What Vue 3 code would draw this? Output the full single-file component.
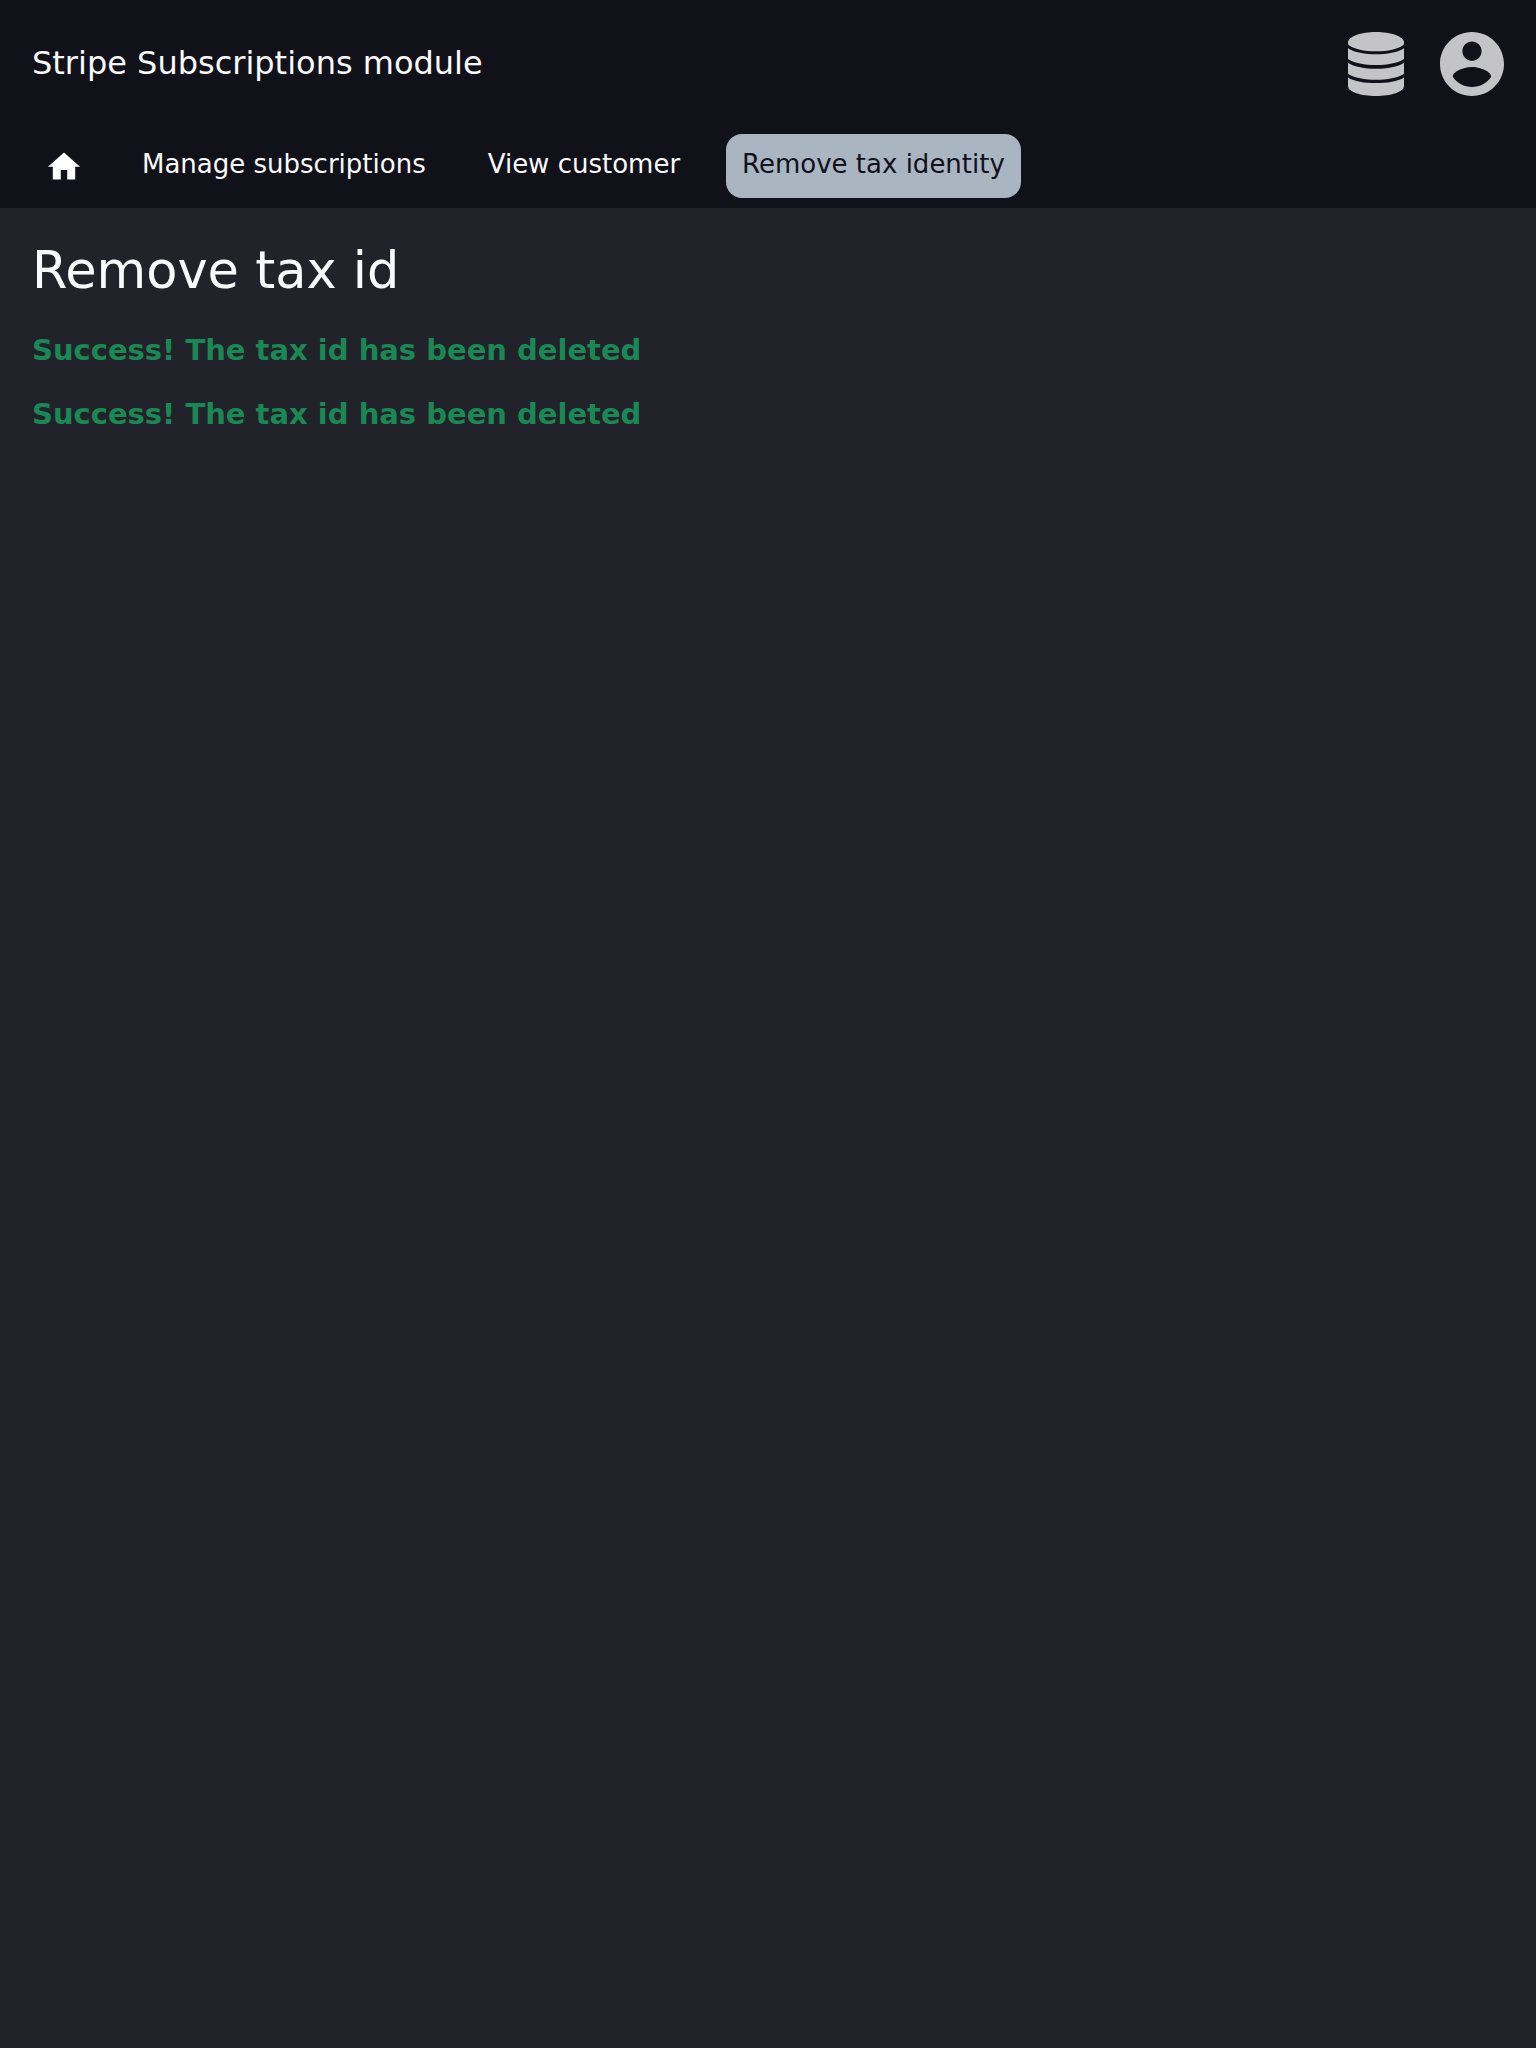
<script setup>
const links = [
  { label: 'Manage subscriptions', current: false },
  { label: 'View customer', current: false },
  { label: 'Remove tax identity', current: true }
]

const messages = [
  { id: 1, text: 'Success! The tax id has been deleted' },
  { id: 2, text: 'Success! The tax id has been deleted' }
]
</script>

<template>
  <div class="page">
    <header class="header">
      <div class="title-bar">
        <a class="title" href="#">Stripe Subscriptions module</a>
        <div class="menus">
          <button class="menu" type="button" aria-label="Administration">
            <svg width="56" height="64" viewBox="0 0 56 64" fill="currentColor" aria-hidden="true">
              <path d="M28 0C43 0 56 4.500 56 10.500c0 1 0 1.800-.6 2.400C50 17 40 19.300 28 19.300S6 17 .6 12.900C0 12.300 0 11.500 0 10.500 0 4.500 13 0 28 0z" />
              <path d="M0 16.300c6 4 17 6 28 6s22-2 28-6v10.700c-6 4-17 6-28 6s-22-2-28-6z" />
              <path d="M0 30.800c6 4 17 6 28 6s22-2 28-6v10.900c-6 4-17 6-28 6s-22-2-28-6z" />
              <path d="M0 45.400c6 4 17 5.700 28 5.700s22-1.700 28-5.700V54c0 6-13 10-28 10S0 60 0 54z" />
            </svg>
          </button>
          <button class="menu" type="button" aria-label="Account">
            <svg width="64" height="64" viewBox="2 2 20 20" fill="currentColor" aria-hidden="true">
              <path d="M12 2C6.480 2 2 6.480 2 12s4.480 10 10 10 10-4.480 10-10S17.520 2 12 2zm0 3c1.660 0 3 1.340 3 3s-1.340 3-3 3-3-1.340-3-3 1.340-3 3-3zm0 14.200c-2.500 0-4.710-1.280-6-3.220.030-1.990 4-3.080 6-3.080 1.990 0 5.970 1.090 6 3.080-1.290 1.940-3.500 3.220-6 3.220z" />
            </svg>
          </button>
        </div>
      </div>
      <nav class="nav" aria-label="Main">
        <a class="link home" href="#" aria-label="Home">
          <svg width="32" height="28" viewBox="2 3 20 17" fill="currentColor" aria-hidden="true">
            <path d="M10 20v-6h4v6h5v-8h3L12 3 2 12h3v8z" />
          </svg>
        </a>
        <a
          v-for="link in links"
          :key="link.label"
          class="link"
          :class="{ current: link.current }"
          :aria-current="link.current ? 'page' : null"
          href="#"
        >{{ link.label }}</a>
      </nav>
    </header>
    <main class="content">
      <h1>Remove tax id</h1>
      <p v-for="message in messages" :key="message.id" class="success">{{ message.text }}</p>
    </main>
  </div>
</template>

<style>
body {
  background: #22222a;
}
</style>

<style scoped>
.page {
  min-height: 100vh;
  background: #22222a;
  color: #fafafc;
  font-family: "DejaVu Sans", sans-serif;
}

.header {
  background: #11111a;
}

.title-bar {
  display: flex;
  align-items: flex-start;
  justify-content: space-between;
  padding: 32px;
}

.title {
  color: inherit;
  font-size: 32px;
  line-height: 62px;
  text-decoration: none;
}

.menus {
  display: flex;
  gap: 36px;
}

.menu {
  display: flex;
  padding: 0;
  border: 0;
  background: none;
  color: #c4c4c6;
  cursor: pointer;
}

.nav {
  display: flex;
  flex-wrap: wrap;
  gap: 30px;
  padding: 6px 32px 10px;
}

.link {
  box-sizing: border-box;
  height: 64px;
  padding: 0 16px;
  border-radius: 16px;
  color: #fafafc;
  font-size: 26px;
  line-height: 60px;
  text-decoration: none;
}

.home {
  display: flex;
  align-items: center;
  color: #ffffff;
}

.current {
  background: #a9b5c1;
  color: #11111a;
}

.content {
  padding: 32px;
}

h1 {
  margin: 0 0 16px;
  font-size: 51px;
  font-weight: 400;
  line-height: 62px;
}

.success {
  margin: 0;
  color: #1a8855;
  font-size: 29px;
  font-weight: 700;
  line-height: 64px;
}
</style>
